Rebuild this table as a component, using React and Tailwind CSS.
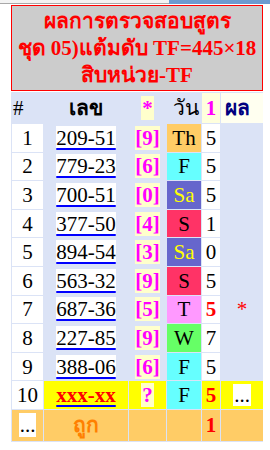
const rows = [
  { n: '1', num: '209-51', star: '[9]', day: 'Th', dayCls: 'bg-[#ffcc66] text-black', d: '5' },
  { n: '2', num: '779-23', star: '[6]', day: 'F', dayCls: 'bg-[#66ffff] text-black', d: '5' },
  { n: '3', num: '700-51', star: '[0]', day: 'Sa', dayCls: 'bg-[#6666cc] text-[#ffff00]', d: '5' },
  { n: '4', num: '377-50', star: '[4]', day: 'S', dayCls: 'bg-[#ff3366] text-black', d: '1' },
  { n: '5', num: '894-54', star: '[3]', day: 'Sa', dayCls: 'bg-[#6666cc] text-[#ffff00]', d: '0' },
  { n: '6', num: '563-32', star: '[9]', day: 'S', dayCls: 'bg-[#ff3366] text-black', d: '5' },
  { n: '7', num: '687-36', star: '[5]', day: 'T', dayCls: 'bg-[#ff99ff] text-black', d: '5', hit: true },
  { n: '8', num: '227-85', star: '[9]', day: 'W', dayCls: 'bg-[#66ff66] text-black', d: '7' },
  { n: '9', num: '388-06', star: '[6]', day: 'F', dayCls: 'bg-[#66ffff] text-black', d: '5' },
];

const cell = 'flex items-center justify-center bg-[#dbe3f6]';

export default function App() {
  return (
    <div className="w-[270px] h-[450px] bg-white font-['Liberation_Serif',serif] text-black overflow-hidden">
      {/* window strip */}
      <div className="flex h-[4px]">
        <div className="w-[169px] bg-[#f3f3f3] border-b border-[#a8a8a8]" />
        <div className="flex-1 bg-[#6c9bd0]" />
      </div>

      {/* title */}
      <div className="ml-[11px] mt-px w-[252px] h-[86px] border border-[#ff0000] bg-[#cccccc] flex flex-col items-center justify-center text-[21px] leading-[27px] font-bold text-[#ff0000] whitespace-nowrap">
        <div>ผลการตรวจสอบสูตร</div>
        <div>ชุด 05)แต้มดับ TF=445×18</div>
        <div>สิบหน่วย-TF</div>
      </div>

      {/* table */}
      <div className="ml-[11px] mt-px w-[252px] grid grid-cols-[31px_84px_37px_34px_18px_42px] grid-rows-[30px_repeat(10,27.6px)_31px] gap-px p-px bg-[#dbe3f6] text-[21px] leading-[24px]">
        {/* header */}
        <div className="flex items-center pl-px bg-[#dbe3f6]">#</div>
        <div className={cell + ' font-bold'}>เลข</div>
        <div className={cell}>
          <span className="bg-[#ffffcc] px-[1px] font-bold text-[#ff00ff]">*</span>
        </div>
        <div className={cell + ' pl-1'}>วัน</div>
        <div className="flex items-center justify-center bg-[#ffffdd] font-bold text-[#ff00ff]">1</div>
        <div className="flex items-center pl-1 bg-[#fffff0] font-bold text-[#000080]">ผล</div>

        {rows.map((r) => (
          <div key={r.n} className="contents">
            <div className="flex items-center justify-center bg-white">{r.n}</div>
            <div className={cell}>
              <span className="bg-white underline decoration-[#0000ff] decoration-2 underline-offset-[3px]">{r.num}</span>
            </div>
            <div className={cell}>
              <span className="bg-[#ffffcc] font-bold text-[#ff00ff]">{r.star}</span>
            </div>
            <div className={'flex items-center justify-center ' + r.dayCls}>{r.day}</div>
            <div className={'flex items-center justify-center bg-white' + (r.hit ? ' font-bold text-[#ff0000]' : '')}>{r.d}</div>
            <div className={cell + ' text-[#ff0000]'}>{r.hit ? '*' : ''}</div>
          </div>
        ))}

        {/* row 10 */}
        <div className="flex items-center justify-center bg-white">10</div>
        <div className="flex items-center justify-center bg-[#ffff00]">
          <span className="font-bold text-[#ff0000] underline decoration-[#0000ff] decoration-2 underline-offset-[3px]">xxx-xx</span>
        </div>
        <div className="flex items-center justify-center bg-[#ffff00]">
          <span className="bg-[#ffffcc] px-[1px] font-bold text-[#ff00ff]">?</span>
        </div>
        <div className="flex items-center justify-center bg-[#66ffff]">F</div>
        <div className="flex items-center justify-center bg-[#ffff00] font-bold text-[#ff0000]">5</div>
        <div className="flex items-center justify-center bg-[#ffff00]">
          <span className="bg-white px-[1px] leading-[22px]">...</span>
        </div>

        {/* summary */}
        <div className="flex items-center justify-center bg-[#ffcc66]">
          <span className="bg-white px-[1px] leading-[24px]">...</span>
        </div>
        <div className="flex items-center justify-center bg-[#ffcc66] font-bold text-[#ff8000]">ถูก</div>
        <div className="bg-[#ffcc66]" />
        <div className="bg-[#ffcc66]" />
        <div className="flex items-center justify-center bg-[#ffcc66] font-bold text-[#ff0000]">1</div>
        <div className="bg-[#ffcc66]" />
      </div>
    </div>
  );
}
